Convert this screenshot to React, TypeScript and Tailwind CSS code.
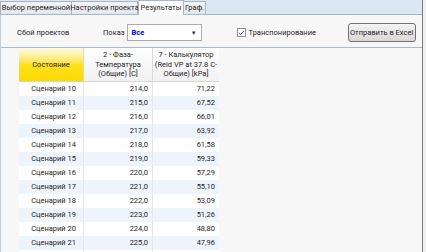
import { Check } from "lucide-react";

const tabs = [
  { label: "Выбор переменной", w: "w-[72px]" },
  { label: "Настройки проекта", w: "w-[66px]" },
  { label: "Результаты", w: "w-[46px]", active: true },
  { label: "Граф.", w: "w-[22px]" },
];

const rows: [string, string, string][] = [
  ["Сценарий 10", "214,0", "71,22"],
  ["Сценарий 11", "215,0", "67,52"],
  ["Сценарий 12", "216,0", "66,01"],
  ["Сценарий 13", "217,0", "63,92"],
  ["Сценарий 14", "218,0", "61,58"],
  ["Сценарий 15", "219,0", "59,33"],
  ["Сценарий 16", "220,0", "57,29"],
  ["Сценарий 17", "221,0", "55,10"],
  ["Сценарий 18", "222,0", "53,09"],
  ["Сценарий 19", "223,0", "51,26"],
  ["Сценарий 20", "224,0", "48,80"],
  ["Сценарий 21", "225,0", "47,96"],
  ["Сценарий 22", "226,0", "46,31"],
];

export default function App() {
  return (
    <div
      className="w-[426px] h-[252px] overflow-hidden bg-[#f0f0f0] flex text-[7.5px] leading-none text-[#1e1e1e] whitespace-nowrap"
      style={{ fontFamily: 'Roboto, "Liberation Sans", sans-serif' }}
    >
      <div className="w-[423px] h-full flex flex-col border-r border-[#7a7a7a]">
        {/* Tab strip */}
        <div className="h-[15px] flex items-end bg-[#dbe6f3] border-b border-[#a3b6cb]">
          {tabs.map((t) =>
            t.active ? (
              <div
                key={t.label}
                className={`${t.w} h-[15px] -mb-px flex items-center justify-center bg-white border-x border-t border-[#a3b6cb]`}
              >
                {t.label}
              </div>
            ) : (
              <div
                key={t.label}
                className={`${t.w} h-[13px] flex items-center justify-center bg-gradient-to-b from-[#f2f4f7] to-[#e3e8ee] border-r border-t border-[#a9b3bf] first:border-l`}
              >
                {t.label}
              </div>
            )
          )}
        </div>

        {/* Content */}
        <div className="flex-1 flex flex-col bg-[#f7f7f7] border-l border-[#c2cfdd]">
          {/* Toolbar */}
          <div className="h-[32px] pt-[3px] flex items-center">
            <span className="ml-[16px] w-[86px]">Сбой проектов</span>
            <span>Показ</span>
            <div className="ml-[2px] w-[75px] h-[17px] flex items-center justify-between bg-white border border-[#acacac] pl-[4px] pr-[4px]">
              <span className="font-bold text-[#0000e6]">Все</span>
              <span className="text-[6px] text-[#333]">▼</span>
            </div>
            <div className="ml-[35px] w-[9px] h-[9px] bg-white border border-[#8e8f8f] flex items-center justify-center">
              <Check size={8} strokeWidth={3} className="text-[#2a3f7e]" />
            </div>
            <span className="ml-[3px] w-[99px]">Транспонирование</span>
            <div className="w-[68px] h-[19px] rounded-[3px] border border-[#707070] bg-gradient-to-b from-[#f4f4f4] to-[#d8d8d8] flex items-center justify-center">
              Отправить в Excel
            </div>
          </div>

          {/* Grid */}
          <div className="flex-1 border-t border-[#a9bccf] pl-[18px] overflow-hidden">
            <div className="w-[200px] flex flex-col bg-white">
              <div className="h-[34px] flex border-b border-[#d5d5d5]">
                <div className="w-[65px] flex items-center justify-center bg-gradient-to-b from-[#fffbe2] via-[#ffe11a] to-[#ffd800] border-r border-[#d8d8d8]">
                  Состояние
                </div>
                <div className="w-[69px] flex items-center justify-center text-center leading-[9.5px] bg-gradient-to-b from-white to-[#f1f1f1] border-r border-[#d8d8d8]">
                  2 - Фаза-
                  <br />
                  Температура
                  <br />
                  (Общие) [C]
                </div>
                <div className="w-[66px] flex items-center justify-center text-center leading-[9.5px] bg-gradient-to-b from-white to-[#f1f1f1]">
                  7 - Калькулятор
                  <br />
                  (Reid VP at 37.8 C-
                  <br />
                  Общие) [kPa]
                </div>
              </div>
              {rows.map((r, i) => (
                <div
                  key={r[0]}
                  className={`h-[14px] flex items-center ${i % 2 ? "bg-[#edf4fc]" : "bg-white"}`}
                >
                  <div className="w-[65px] h-full flex items-center justify-end pr-[7px] border-r border-[#e6e6e6]">
                    {r[0]}
                  </div>
                  <div className="w-[69px] h-full flex items-center justify-end pr-[4px] border-r border-[#e6e6e6]">
                    {r[1]}
                  </div>
                  <div className="w-[66px] h-full flex items-center justify-end pr-[4px]">
                    {r[2]}
                  </div>
                </div>
              ))}
            </div>
          </div>
        </div>
      </div>
    </div>
  );
}
